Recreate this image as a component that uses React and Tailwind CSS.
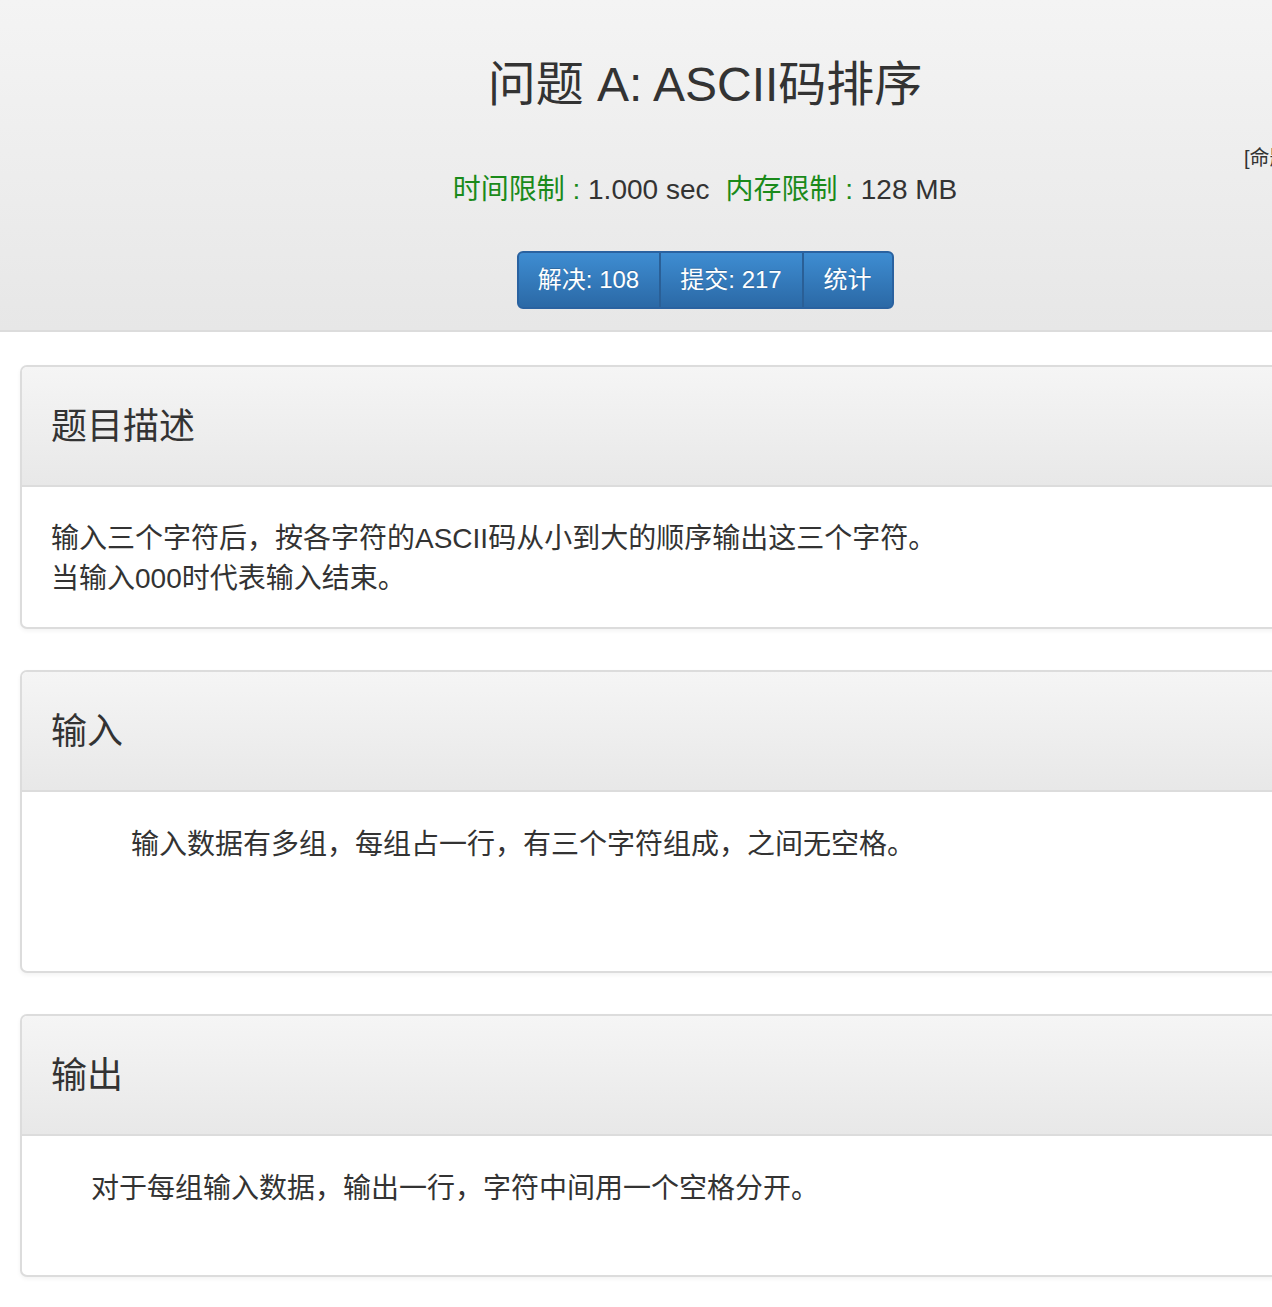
const font = "font-['Liberation_Sans','Noto_Sans_CJK_SC',sans-serif]";

const Panel = ({ title, children, bodyClass }) => (
  <div className="mb-[41px] overflow-hidden rounded-[7px] border-2 border-[#dcdcdc] bg-white shadow-[0_2px_4px_rgba(0,0,0,0.05)]">
    <div className="border-b-2 border-[#dcdcdc] bg-gradient-to-b from-[#f5f5f5] to-[#e8e8e8] px-[29px] pb-[38px] pt-[40px]">
      <h3 className="text-[36px] leading-[40px] text-[#333]">{title}</h3>
    </div>
    <div className={bodyClass}>{children}</div>
  </div>
);

export default function App() {
  return (
    <div className={`min-h-[1307px] w-full overflow-hidden bg-white ${font} text-[#333]`}>
      <div className="w-[1410px]">
        {/* Header */}
        <div className="relative border-b-2 border-[#dcdcdc] bg-gradient-to-b from-[#f4f4f4] to-[#e7e7e7] pb-[21px] pt-[58px] text-center">
          <h1 className="text-[48px] leading-[53px] text-[#333]">问题 A: ASCII码排序</h1>
          <div className="mt-[59px] text-[28px] leading-[40px]">
            <span className="text-[#1a8a1a]">时间限制 : </span>
            <span>1.000 sec</span>
            <span className="ml-[16px] text-[#1a8a1a]">内存限制 : </span>
            <span>128 MB</span>
          </div>
          <div className="mt-[41px] inline-flex overflow-hidden rounded-[6px] border-2 border-[#2a62a0] bg-gradient-to-b from-[#3e8dd2] to-[#2b69a6] text-[24px] leading-[36px] text-white [text-shadow:0_-1px_0_rgba(0,0,0,0.2)]">
            <span className="w-[142px] border-r-2 border-[#2a5f96] py-[9px]">解决: 108</span>
            <span className="w-[143px] border-r-2 border-[#2a5f96] py-[9px]">提交: 217</span>
            <span className="w-[88px] py-[9px]">统计</span>
          </div>
          <div className="absolute left-[1244px] top-[144px] text-[20px] leading-[28px] text-[#333]">[命题人 : admin]</div>
        </div>

        {/* Panels */}
        <div className="px-[20px] pt-[33px]">
          <Panel title="题目描述" bodyClass="px-[29px] pb-[28px] pt-[32px] text-[28px] leading-[40px]">
            <p>输入三个字符后，按各字符的ASCII码从小到大的顺序输出这三个字符。</p>
            <p>当输入000时代表输入结束。</p>
          </Panel>
          <Panel title="输入" bodyClass="px-[29px] pb-[77px] pt-[33px] text-[28px] leading-[40px]">
            <p className="pl-[80px]">输入数据有多组，每组占一行，有三个字符组成，之间无空格。</p>
            <p className="h-[29px]"></p>
          </Panel>
          <Panel title="输出" bodyClass="px-[29px] pb-[66px] pt-[33px] text-[28px] leading-[40px]">
            <p className="pl-[40px]">对于每组输入数据，输出一行，字符中间用一个空格分开。</p>
          </Panel>
        </div>
      </div>
    </div>
  );
}
